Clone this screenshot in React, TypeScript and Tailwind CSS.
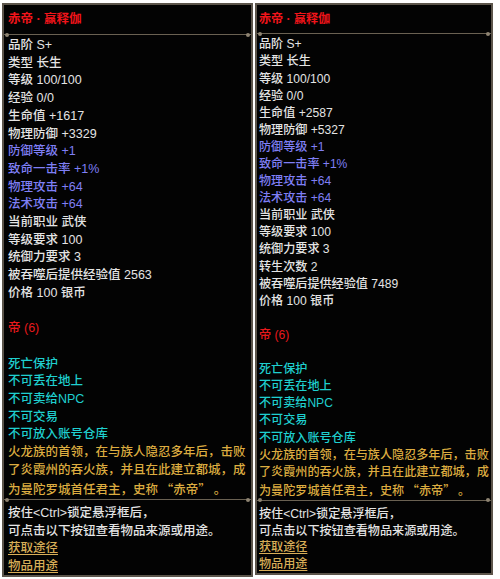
import React from "react";

type Tone = "w" | "b" | "r" | "c" | "g" | "blank";
type Line = { t: React.ReactNode; c: Tone };

const toneClass: Record<Tone, string> = {
  w: "text-[#e4e4e4]",
  b: "text-[#7f7ff5]",
  r: "text-[#e8191c]",
  c: "text-[#1fcfcf]",
  g: "text-[#dcac40]",
  blank: "text-transparent",
};

const cjk = "[font-family:'Noto_Sans_CJK_SC',sans-serif]";

const head: Line[] = [
  { t: "品阶 S+", c: "w" },
  { t: "类型 长生", c: "w" },
  { t: "等级 100/100", c: "w" },
  { t: "经验 0/0", c: "w" },
];

const tail: Line[] = [
  { t: "\u00a0", c: "blank" },
  { t: "帝 (6)", c: "r" },
  { t: "\u00a0", c: "blank" },
  { t: "死亡保护", c: "c" },
  { t: "不可丢在地上", c: "c" },
  { t: "不可卖给NPC", c: "c" },
  { t: "不可交易", c: "c" },
  { t: "不可放入账号仓库", c: "c" },
  { t: "火龙族的首领，在与族人隐忍多年后，击败", c: "g" },
  { t: "了炎霞州的吞火族，并且在此建立都城，成", c: "g" },
  {
    t: (
      <span className={cjk}>为曼陀罗城首任君主，史称 “赤帝” 。</span>
    ),
    c: "g",
  },
];

const mid: Line[] = [
  { t: "防御等级 +1", c: "b" },
  { t: "致命一击率 +1%", c: "b" },
  { t: "物理攻击 +64", c: "b" },
  { t: "法术攻击 +64", c: "b" },
  { t: "当前职业 武侠", c: "w" },
  { t: "等级要求 100", c: "w" },
  { t: "统御力要求 3", c: "w" },
];

const leftLines: Line[] = [
  ...head,
  { t: "生命值 +1617", c: "w" },
  { t: "物理防御 +3329", c: "w" },
  ...mid,
  { t: "被吞噬后提供经验值 2563", c: "w" },
  { t: "价格 100 银币", c: "w" },
  ...tail,
];

const rightLines: Line[] = [
  ...head,
  { t: "生命值 +2587", c: "w" },
  { t: "物理防御 +5327", c: "w" },
  ...mid,
  { t: "转生次数 2", c: "w" },
  { t: "被吞噬后提供经验值 7489", c: "w" },
  { t: "价格 100 银币", c: "w" },
  ...tail,
];

function Divider() {
  return (
    <div className="relative h-px bg-[#6a6152]">
      <span className="absolute left-[1px] top-[-1.5px] w-[4px] h-[4px] rounded-full bg-[#8e8472]" />
      <span className="absolute right-[1px] top-[-1.5px] w-[4px] h-[4px] rounded-full bg-[#8e8472]" />
    </div>
  );
}

type PanelProps = {
  lines: Line[];
  box: string;
  text: string;
  pad: string;
  lh: string;
  lh2: string;
  titleH: string;
};

function Panel({ lines, box, text, pad, lh, lh2, titleH }: PanelProps) {
  return (
    <div
      className={`${box} flex flex-col bg-[#030303] border-2 border-[#5c554b] overflow-hidden font-medium ${text}`}
    >
      <div className={`${titleH} ${pad} flex items-center font-bold text-[#f0141a]`}>
        赤帝 · 赢释伽
      </div>
      <Divider />
      <div className={`${pad} pt-[2px] flex-1`}>
        {lines.map((l, i) => (
          <div key={i} className={`${lh} whitespace-nowrap ${toneClass[l.c]}`}>
            {l.t}
          </div>
        ))}
      </div>
      <Divider />
      <div className={`${pad} pt-[5px] text-[#e4e4e4]`}>
        <div className={`${lh2} whitespace-nowrap`}>按住&lt;Ctrl&gt;锁定悬浮框后，</div>
        <div className={`${lh2} whitespace-nowrap`}>可点击以下按钮查看物品来源或用途。</div>
        <div className={`${lh2} text-[#d8ae58] underline underline-offset-2`}>获取途径</div>
        <div className={`${lh2} text-[#d8ae58] underline underline-offset-2`}>物品用途</div>
      </div>
    </div>
  );
}

export default function App() {
  return (
    <div className="w-[500px] h-[579px] bg-white overflow-hidden [font-family:'Liberation_Sans','Noto_Sans_CJK_SC',sans-serif]">
      <div className="flex items-start pt-[3px] pl-[2px] gap-[2px]">
        <Panel
          lines={leftLines}
          box="w-[251px] h-[574px]"
          text="text-[12.5px]"
          pad="px-[4px]"
          lh="leading-[17.7px]"
          lh2="leading-[17.4px]"
          titleH="h-[29px]"
        />
        <Panel
          lines={rightLines}
          box="w-[238px] h-[572px]"
          text="text-[12.1px]"
          pad="px-[2px]"
          lh="leading-[17.1px]"
          lh2="leading-[16.8px]"
          titleH="h-[30px]"
        />
      </div>
    </div>
  );
}
